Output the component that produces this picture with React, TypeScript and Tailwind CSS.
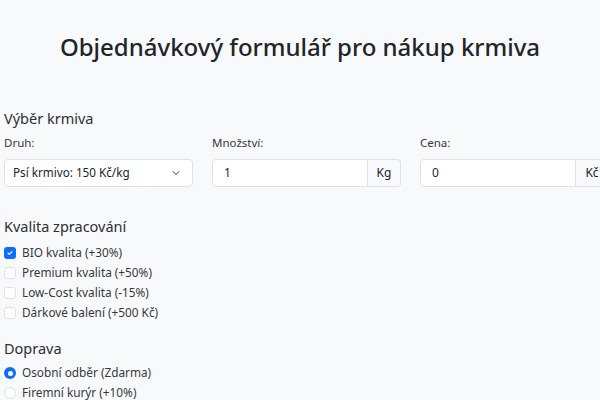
import { ChevronDown } from 'lucide-react'

const qualities = [
  { label: 'BIO kvalita (+30%)', checked: true },
  { label: 'Premium kvalita (+50%)', checked: false },
  { label: 'Low-Cost kvalita (-15%)', checked: false },
  { label: 'Dárkové balení (+500 Kč)', checked: false },
]

const transports = [
  { label: 'Osobní odběr (Zdarma)', checked: true },
  { label: 'Firemní kurýr (+10%)', checked: false },
]

function Checkbox({ checked }: { checked: boolean }) {
  return checked ? (
    <span className="w-3 h-3 rounded-[3px] bg-[#0d6efd] flex items-center justify-center shrink-0">
      <svg width="8" height="8" viewBox="0 0 20 20">
        <path d="M5 10.5l3 3 7-7" fill="none" stroke="#fff" strokeWidth="3" strokeLinecap="round" strokeLinejoin="round" />
      </svg>
    </span>
  ) : (
    <span className="w-3 h-3 rounded-[3px] border border-[#dee2e6] bg-white shrink-0" />
  )
}

function Radio({ checked }: { checked: boolean }) {
  return checked ? (
    <span className="w-3 h-3 rounded-full bg-[#0d6efd] flex items-center justify-center shrink-0">
      <span className="w-[5px] h-[5px] rounded-full bg-white" />
    </span>
  ) : (
    <span className="w-3 h-3 rounded-full border border-[#dee2e6] bg-white shrink-0" />
  )
}

function InputGroup({ value, unit }: { value: string; unit: string }) {
  return (
    <div className="flex h-[28px] w-[189px]">
      <div className="flex-1 bg-white border border-[#dee2e6] rounded-l-[4px] flex items-center pl-[11px] text-[12px] text-[#212529]">
        {value}
      </div>
      <div className="w-[33px] bg-[#f8f9fa] border border-l-0 border-[#dee2e6] rounded-r-[4px] flex items-center justify-center text-[12px] text-[#212529]">
        {unit}
      </div>
    </div>
  )
}

export default function App() {
  return (
    <div
      className="w-[600px] h-[400px] overflow-hidden bg-[#f8f9fa] text-[#212529]"
      style={{ fontFamily: '"Noto Sans", sans-serif' }}
    >
      <h1 className="mt-[29px] h-[36px] leading-[36px] text-center text-[24px] font-medium text-[#212529]">
        Objednávkový formulář pro nákup krmiva
      </h1>

      <div className="pl-[4px]">
        <h2 className="mt-[43px] h-[20px] leading-[20px] text-[14.5px] text-[#2b3035]">Výběr krmiva</h2>
        <div className="grid grid-cols-[189px_189px_189px] gap-x-[19px]">
          <div>
            <div className="mt-[6px] h-[18px] leading-[18px] text-[11.5px] text-[#343a40]">Druh:</div>
            <div className="mt-[7px] h-[28px] w-[189px] bg-white border border-[#dee2e6] rounded-[4px] flex items-center justify-between pl-[8px] pr-[10px] text-[11.7px]">
              <span>Psí krmivo: 150 Kč/kg</span>
              <ChevronDown size={12} strokeWidth={2} className="text-[#343a40]" />
            </div>
          </div>
          <div>
            <div className="mt-[6px] h-[18px] leading-[18px] text-[11.5px] text-[#343a40]">Množství:</div>
            <div className="mt-[7px]">
              <InputGroup value="1" unit="Kg" />
            </div>
          </div>
          <div>
            <div className="mt-[6px] h-[18px] leading-[18px] text-[11.5px] text-[#343a40]">Cena:</div>
            <div className="mt-[7px]">
              <InputGroup value="0" unit="Kč" />
            </div>
          </div>
        </div>

        <h2 className="mt-[29px] h-[20px] leading-[20px] text-[14.5px] text-[#2b3035]">Kvalita zpracování</h2>
        <div className="mt-[7px] flex flex-col">
          {qualities.map((q) => (
            <div key={q.label} className="h-[20px] flex items-center gap-[6px] text-[11.8px] text-[#343a40]">
              <Checkbox checked={q.checked} />
              <span>{q.label}</span>
            </div>
          ))}
        </div>

        <h2 className="mt-[15px] h-[20px] leading-[20px] text-[14.5px] text-[#2b3035]">Doprava</h2>
        <div className="mt-[5px] flex flex-col">
          {transports.map((t) => (
            <div key={t.label} className="h-[20px] flex items-center gap-[6px] text-[11.8px] text-[#343a40]">
              <Radio checked={t.checked} />
              <span>{t.label}</span>
            </div>
          ))}
        </div>
      </div>
    </div>
  )
}
